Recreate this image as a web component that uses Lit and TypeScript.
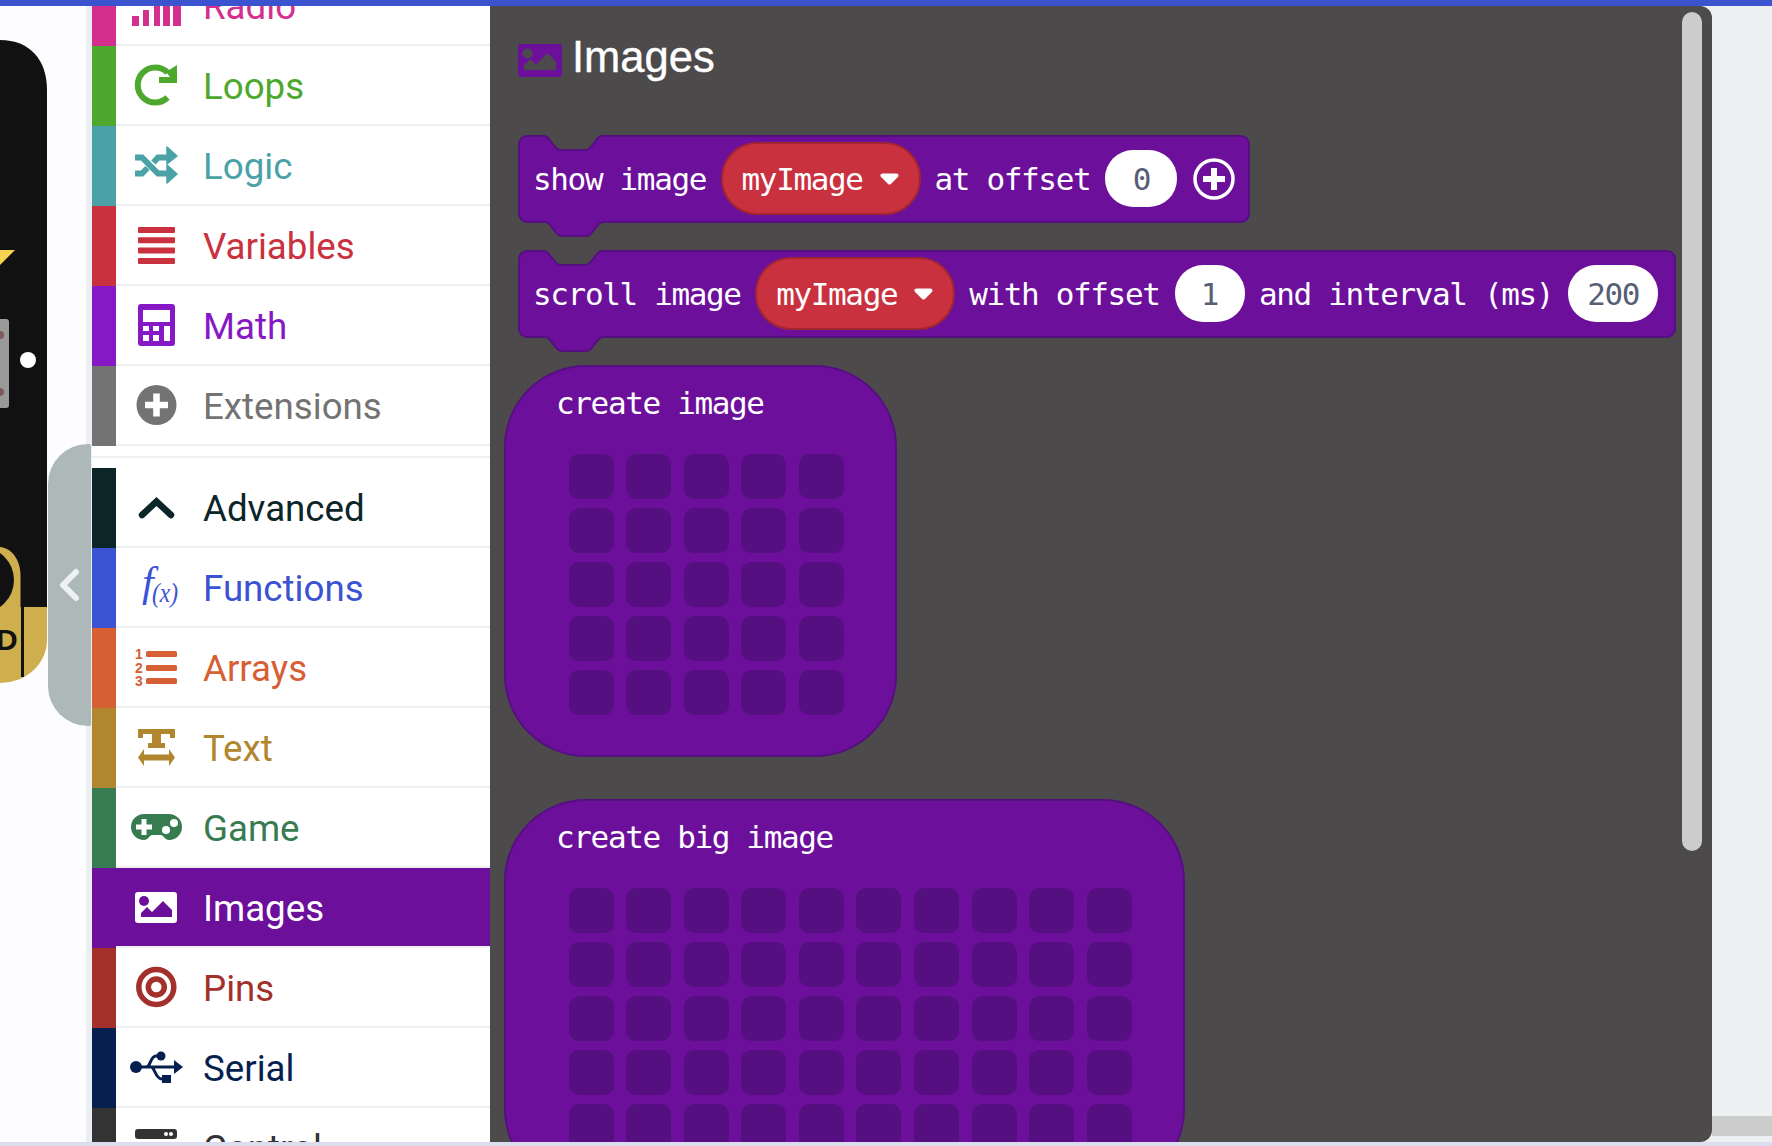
import { LitElement, html, css, svg } from 'lit';
import { customElement } from 'lit/decorators.js';

const PURPLE = '#6c109c';

// every icon is drawn in a 56x56 box, 1 unit = 1 screen pixel
const ICONS: Record<string, (c: string) => unknown> = {
  radio: () => svg`
    <rect x="4" y="39" width="7" height="10" /><rect x="15" y="33" width="6" height="16" />
    <rect x="26" y="25" width="6" height="24" /><rect x="35" y="17" width="7" height="32" />
    <rect x="45" y="7" width="8" height="42" />`,
  loops: (c) => svg`
    <path d="M39.5 40.5A17.5 17.5 0 1 1 39.5 15.5" fill="none" stroke=${c} stroke-width="6" />
    <path d="M49 8V26H31V20H42L38 15Z" />`,
  logic: (c) => svg`
    <path d="M7 20.5H14L30 36.5H41M7 36.5H14L19.5 31M25.5 25.5L30 20.5H41" fill="none" stroke=${c} stroke-width="6" />
    <path d="M39 10L49 19L39 27ZM39 28L49 37L39 46Z" stroke=${c} stroke-width="1.5" stroke-linejoin="round" />`,
  variables: () => svg`
    <rect x="10" y="10" width="37" height="6" rx="1" /><rect x="10" y="20.3" width="37" height="6" rx="1" />
    <rect x="10" y="30.6" width="37" height="6" rx="1" /><rect x="10" y="41" width="37" height="6" rx="1" />`,
  math: () => svg`
    <rect x="10" y="7" width="37" height="42" rx="3" />
    <g fill="#fff">
      <rect x="15" y="13" width="27" height="12" />
      <rect x="15" y="29" width="6" height="5" /><rect x="25" y="29" width="6" height="5" />
      <rect x="15" y="38" width="6" height="6" /><rect x="25" y="38" width="6" height="6" />
      <rect x="36" y="29" width="6" height="15" />
    </g>`,
  extensions: () => svg`
    <circle cx="28.5" cy="28" r="20" />
    <path d="M25.2 16.5H31.8V24.7H40V31.3H31.8V39.5H25.2V31.3H17V24.7H25.2Z" fill="#fff" />`,
  advanced: (c) => svg`
    <path d="M14 36L28.5 22.5L43 36" fill="none" stroke=${c} stroke-width="6.5" stroke-linecap="round" />`,
  functions: () => svg`
    <text x="14" y="37" font-family="Liberation Serif" font-style="italic" font-size="42">f</text>
    <text x="24" y="43" font-family="Liberation Serif" font-style="italic" font-size="28"
      textLength="26" lengthAdjust="spacingAndGlyphs">(x)</text>`,
  arrays: () => svg`
    <rect x="18" y="12" width="31" height="6" rx="1.5" /><rect x="18" y="26" width="31" height="6" rx="1.5" />
    <rect x="18" y="39" width="31" height="6" rx="1.5" />
    <g font-family="Liberation Sans" font-weight="700" font-size="14" stroke-width="0.5">
      <text x="7" y="20">1</text><text x="7" y="33.500">2</text><text x="7" y="47">3</text>
    </g>`,
  text: () => svg`
    <path d="M10 10H47V19H42V15H33V24H37V29H20V24H24V15H15V19H10Z" />
    <path d="M10 38.5L16 30V35.5H41V30L47 38.5L41 47V41.5H16V47Z" />`,
  game: () => svg`
    <path d="M16 15H41A13 13 0 0 1 41 41C37 41 35 36 33 36H24C22 36 20 41 16 41A13 13 0 0 1 16 15Z" />
    <path d="M13.5 20H18.5V25.5H24V30.5H18.5V36H13.5V30.5H8V25.5H13.5Z" fill="#fff" />
    <circle cx="46" cy="24" r="4" fill="#fff" /><circle cx="38" cy="31" r="4" fill="#fff" />`,
  images: (c) => svg`
    <rect x="7" y="13" width="42" height="31" rx="3" fill="#fff" />
    <circle cx="16" cy="22" r="5" fill=${c} />
    <path d="M13 38V34L19 28L24 33L35 22L44 31V38Z" fill=${c} />`,
  pins: (c) => svg`
    <circle cx="28.3" cy="28" r="17.5" fill="none" stroke=${c} stroke-width="5.5" />
    <circle cx="28.3" cy="28" r="8" fill="none" stroke=${c} stroke-width="5.5" />`,
  serial: (c) => svg`
    <circle cx="8" cy="28" r="6" />
    <path d="M8 28H48M18 28C23 28 22 17 28 17H33M23 28C27 28 27 40 34 40" fill="none" stroke=${c} stroke-width="3" />
    <path d="M46 21L55 28L46 35Z" /><circle cx="33" cy="17" r="4.5" />
    <rect x="34" y="36" width="9" height="8" />`,
  control: () => svg`
    <rect x="7" y="10" width="42" height="10" rx="3" />
    <circle cx="38" cy="15" r="2" fill="#fff" /><circle cx="43" cy="15" r="2" fill="#fff" />
    <rect x="7" y="24" width="42" height="10" rx="3" />`,
};

interface Category {
  id: string;
  label: string;
  color: string;
  selected?: boolean;
}

const TOP_ROWS: Category[] = [
  { id: 'radio', label: 'Radio', color: '#d42f8f' },
  { id: 'loops', label: 'Loops', color: '#4ea82e' },
  { id: 'logic', label: 'Logic', color: '#4aa2a7' },
  { id: 'variables', label: 'Variables', color: '#c9313f' },
  { id: 'math', label: 'Math', color: '#8718c5' },
  { id: 'extensions', label: 'Extensions', color: '#737373' },
];

const ADVANCED_ROWS: Category[] = [
  { id: 'advanced', label: 'Advanced', color: '#0c2529' },
  { id: 'functions', label: 'Functions', color: '#3b53d3' },
  { id: 'arrays', label: 'Arrays', color: '#d66034' },
  { id: 'text', label: 'Text', color: '#b0862e' },
  { id: 'game', label: 'Game', color: '#377b50' },
  { id: 'images', label: 'Images', color: PURPLE, selected: true },
  { id: 'pins', label: 'Pins', color: '#a3302a' },
  { id: 'serial', label: 'Serial', color: '#071f4e' },
  { id: 'control', label: 'Control', color: '#333333' },
];

const blockPath = (w: number) =>
  `M1 9a8 8 0 0 1 8-8h17c3 0 4.5 2 6.5 5l4 5c2 3 3.5 4 6.5 4h24c3 0 4.5-1 6.5-4l4-5c2-3 3.5-5 6.5-5H${w - 9}` +
  `a8 8 0 0 1 8 8V79a8 8 0 0 1-8 8H85c-3 0-4.5 2-6.5 5l-4 5c-2 3-3.5 4-6.5 4H44c-3 0-4.5-1-6.5-4l-4-5c-2-3-3.5-5-6.5-5H9a8 8 0 0 1-8-8Z`;

@customElement('app-root')
export class AppRoot extends LitElement {
  private _renderRow(cat: Category) {
    const iconColor = cat.selected ? '#fff' : cat.color;
    return html`
      <div class="row ${cat.selected ? 'selected' : ''}" style="--c: ${cat.color}">
        <div class="row-bar"></div>
        <div class="row-body">
          <svg class="row-icon" width="56" height="56" viewBox="0 0 56 56" fill=${iconColor}>
            ${ICONS[cat.id](cat.selected ? cat.color : iconColor)}
          </svg>
          <span class="row-label">${cat.label}</span>
        </div>
      </div>
    `;
  }

  private _renderDropdown(label: string) {
    return html`
      <div class="dropdown">
        <span>${label}</span>
        <svg width="19" height="12" viewBox="0 0 19 12">
          <path d="M2.5 2.5H16.5L9.5 9.5Z" fill="#fff" stroke="#fff" stroke-width="4" stroke-linejoin="round" />
        </svg>
      </div>
    `;
  }

  private _renderBlock(width: number, content: unknown) {
    return html`
      <div class="block" style="width: ${width}px">
        <svg class="block-shape" width=${width} height="103" viewBox="0 0 ${width} 103">
          <path d=${blockPath(width)} />
        </svg>
        ${content}
      </div>
    `;
  }

  private _renderImageBlock(label: string, cols: number, width: number) {
    const cells = Array.from({ length: cols * 5 });
    return html`
      <div class="image-block" style="width: ${width}px">
        <div class="image-label">${label}</div>
        <div class="led-grid" style="grid-template-columns: repeat(${cols}, 45px)">
          ${cells.map(() => html`<div class="led"></div>`)}
        </div>
      </div>
    `;
  }

  private _renderSim() {
    return html`
      <svg class="sim" width="86" height="1136" viewBox="0 6 86 1136">
        <path d="M0 40C30 40 47 60 47 90V610H0Z" fill="#111" />
        <path d="M0 250H15L0 265Z" fill="#f7d354" />
        <path d="M0 319H6a3 3 0 0 1 3 3V405a3 3 0 0 1-3 3H0Z" fill="#9a9a9a" />
        <circle cx="0" cy="335" r="4" fill="#7d5c58" />
        <circle cx="0" cy="392" r="4" fill="#7d5c58" />
        <circle cx="28" cy="360" r="8" fill="#fff" />
        <path d="M0 547C12 548 20.500 560 20.500 576V610H0Z" fill="#cfae4e" />
        <circle cx="-19" cy="580" r="33" fill="#111" />
        <path d="M0 607H47V640A47 43 0 0 1 0 683Z" fill="#cfae4e" />
        <rect x="21" y="607" width="3" height="70" fill="#111" />
        <text x="-4" y="650" font-family="Liberation Sans" font-weight="700" font-size="30" fill="#111">D</text>
      </svg>
      <div class="sim-toggle">
        <svg width="24" height="36" viewBox="0 0 24 36">
          <path d="M19 5L6 18L19 31" fill="none" stroke="#eef1f1" stroke-width="6" stroke-linecap="round" stroke-linejoin="round" />
        </svg>
      </div>
    `;
  }

  private _renderPlus() {
    return html`
      <svg class="plus" width="42" height="42" viewBox="0 0 42 42">
        <circle cx="21" cy="21" r="19" fill="none" stroke="#fff" stroke-width="3.5" />
        <path d="M18 10H24V18H32V24H24V32H18V24H10V18H18Z" fill="#fff" />
      </svg>
    `;
  }

  protected render() {
    return html`
      <div class="top-bar"></div>
      <div class="main">
        <div class="sim-pane">${this._renderSim()}</div>
        <div class="toolbox">
          <div class="toolbox-list">
            ${TOP_ROWS.map((c) => this._renderRow(c))}
            <div class="divider"></div>
            ${ADVANCED_ROWS.map((c) => this._renderRow(c))}
          </div>
        </div>
        <div class="flyout">
          <div class="flyout-title">
            <svg width="44" height="33" viewBox="0 0 44 33">
              <rect width="44" height="33" rx="3" fill=${PURPLE} />
              <circle cx="9.5" cy="9.5" r="5" fill="#4c4a4b" />
              <path d="M6 26V21.500L12.500 15L18 20.500L29.500 9L38 18V26Z" fill="#4c4a4b" />
            </svg>
            <span>Images</span>
          </div>
          ${this._renderBlock(732, html`
            <div class="block-row">
              <span>show image</span>
              ${this._renderDropdown('myImage')}
              <span>at offset</span>
              <div class="value" style="width: 72px">0</div>
              ${this._renderPlus()}
            </div>
          `)}
          ${this._renderBlock(1158, html`
            <div class="block-row">
              <span>scroll image</span>
              ${this._renderDropdown('myImage')}
              <span>with offset</span>
              <div class="value" style="width: 70px">1</div>
              <span>and interval (ms)</span>
              <div class="value" style="width: 90px">200</div>
            </div>
          `)}
          ${this._renderImageBlock('create image', 5, 393)}
          ${this._renderImageBlock('create big image', 10, 681)}
          <div class="flyout-thumb"></div>
        </div>
        <div class="right-pane">
          <div class="right-fill"></div>
          <div class="right-scroll"></div>
        </div>
      </div>
      <div class="bottom-strip"></div>
    `;
  }

  static styles = css`
    :host {
      display: flex;
      flex-direction: column;
      width: 1772px;
      height: 1146px;
      overflow: hidden;
      background: #fdfdff;
      font-family: Roboto, sans-serif;
    }

    .top-bar {
      height: 6px;
      flex: none;
      background: #3b53cf;
      position: relative;
      z-index: 3;
    }

    .bottom-strip {
      height: 4px;
      flex: none;
      background: #dcdcef;
      position: relative;
      z-index: 3;
    }

    .main {
      flex: 1;
      min-height: 0;
      display: flex;
      background: #ecf0f1;
      position: relative;
    }

    .sim-pane {
      width: 86px;
      flex: none;
      background: #fdfdff;
      position: relative;
    }

    .sim {
      position: absolute;
      top: 0;
      left: 0;
    }

    .sim-toggle {
      position: absolute;
      left: 48px;
      top: 438px;
      width: 43px;
      height: 282px;
      background: #adb8b8;
      border-radius: 40px 2px 2px 40px;
      z-index: 2;
      display: flex;
      align-items: center;
    }

    .sim-toggle svg {
      margin: 0 0 0 9px;
    }

    .toolbox {
      width: 404px;
      flex: none;
      box-sizing: border-box;
      border-left: 6px solid #eceff1;
      background: #fff;
      overflow: hidden;
    }

    .toolbox-list {
      margin-top: -40px;
    }

    .divider {
      height: 2px;
      margin: 10px 0;
      background: #ecf0f1;
    }

    .row {
      display: flex;
      height: 80px;
      color: var(--c);
    }

    .row-bar {
      width: 24px;
      flex: none;
      background: var(--c);
    }

    .row-body {
      flex: 1;
      display: flex;
      align-items: center;
      box-sizing: border-box;
      border-bottom: 2px solid #ecf0f1;
      padding-left: 12px;
    }

    .selected .row-body {
      background: var(--c);
      color: #fff;
    }

    .row-icon {
      flex: none;
      margin-right: 19px;
    }

    .row-label {
      font-size: 36.7px;
      line-height: 44px;
      padding-top: 4px;
    }

    .flyout {
      width: 1222px;
      flex: none;
      box-sizing: border-box;
      padding: 24px 0 0 28px;
      background: #4c4a4b;
      border-radius: 0 12px 12px 0;
      position: relative;
      overflow: hidden;
    }

    .flyout-title {
      display: flex;
      align-items: center;
      gap: 10px;
      height: 60px;
      margin-bottom: 45px;
      color: #fff;
      font-family: 'Liberation Sans', sans-serif;
      font-size: 43.5px;
      -webkit-text-stroke: 0.4px #fff;
    }

    .flyout-title span {
      padding-bottom: 6px;
    }

    .block {
      position: relative;
      height: 87px;
      margin-bottom: 28px;
      font-family: 'DejaVu Sans Mono', monospace;
      font-size: 31px;
      letter-spacing: -1.36px;
      color: #fff;
    }

    .block-shape {
      position: absolute;
      top: 0;
      left: 0;
      fill: #6c109c;
      stroke: #560f80;
      stroke-width: 2;
    }

    .block-row {
      position: relative;
      height: 87px;
      display: flex;
      align-items: center;
      gap: 14.5px;
      padding-left: 15px;
      white-space: pre;
    }

    .dropdown {
      display: flex;
      align-items: center;
      gap: 17px;
      box-sizing: border-box;
      width: 200px;
      height: 73px;
      margin-right: -0.5px;
      padding-left: 19px;
      background: #c9313f;
      border: 2px solid #a1262f;
      border-radius: 36px;
    }

    .value {
      height: 57px;
      margin-left: 0.5px;
      display: flex;
      align-items: center;
      justify-content: center;
      background: #fff;
      border-radius: 28px;
      color: #575e75;
    }

    .plus {
      margin-left: 1px;
    }

    .image-block {
      box-sizing: border-box;
      height: 392px;
      margin: 0 0 42px -14px;
      padding: 18.5px 0 0 50px;
      background: #6c109c;
      border: 2px solid #560f80;
      border-radius: 82px;
      font-family: 'DejaVu Sans Mono', monospace;
      font-size: 31px;
      letter-spacing: -1.36px;
      color: #fff;
    }

    .image-label {
      height: 34px;
      line-height: 34px;
      white-space: pre;
    }

    .led-grid {
      display: grid;
      column-gap: 12.6px;
      row-gap: 9px;
      margin: 34.5px 0 0 12.5px;
    }

    .led {
      width: 45px;
      height: 45px;
      border-radius: 10px;
      background: #560f80;
    }

    .flyout-thumb {
      position: absolute;
      left: 1192px;
      top: 6px;
      width: 20px;
      height: 839px;
      border-radius: 10px;
      background: #cccccc;
    }

    .right-pane {
      flex: 1;
      display: flex;
      flex-direction: column;
      padding-bottom: 6px;
    }

    .right-fill {
      flex: 1;
    }

    .right-scroll {
      height: 20px;
      background: #cccccc;
    }
  `;
}
